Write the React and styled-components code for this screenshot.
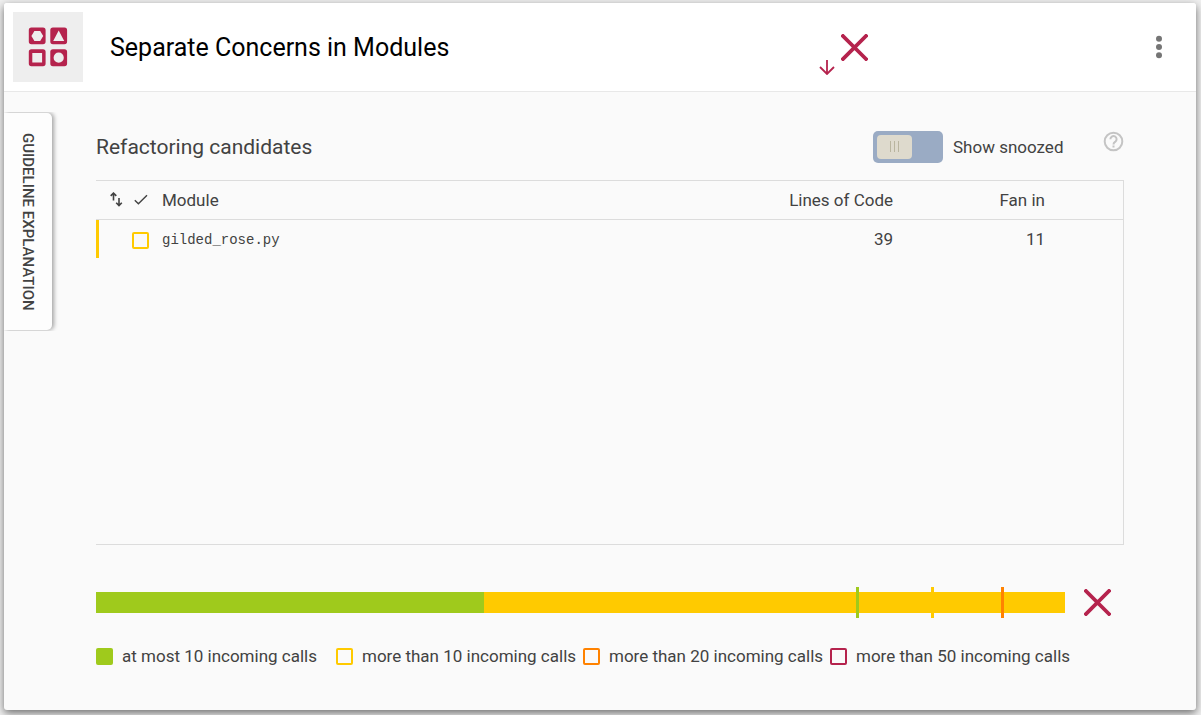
import React, { useState } from "react";
import styled, { createGlobalStyle } from "styled-components";

const colors = {
  crimson: "#b5234d",
  green: "#9fca1c",
  yellow: "#ffca00",
  orange: "#ff8200",
  text: "#424242",
  line: "#dcdcdc",
};

const GlobalStyle = createGlobalStyle`
  *, *::before, *::after { box-sizing: border-box; }
  body {
    margin: 0;
    background: #f0f0f0;
    color: ${colors.text};
    font-family: Roboto, "Liberation Sans", sans-serif;
    font-size: 17px;
    line-height: 24px;
  }
  button { font: inherit; color: inherit; border: 0; background: none; padding: 0; cursor: pointer; }
  svg { display: block; flex: none; }
`;

const Page = styled.div`
  display: flex;
  min-height: 100vh;
  padding: 3px 5px 5px 4px;
`;

const Card = styled.main`
  display: flex;
  flex: 1;
  flex-direction: column;
  min-width: 0;
  background: #fafafa;
  border-radius: 3px;
  box-shadow: 0 3px 9px rgba(0, 0, 0, 0.55);
`;

const Header = styled.header`
  display: flex;
  align-items: center;
  height: 89px;
  padding: 0 24px 0 9px;
  background: #fff;
  border-bottom: 1px solid #e8e8e8;
  border-radius: 3px 3px 0 0;
`;

const Logo = styled.div`
  display: flex;
  align-items: center;
  justify-content: center;
  width: 70px;
  height: 70px;
  background: #eee;
`;

const Title = styled.h1`
  flex: 1;
  margin: 0;
  padding: 2px 0 0 27px;
  color: #000;
  font-size: 25px;
  font-weight: 400;
  line-height: 32px;
`;

const Rating = styled.div`
  display: flex;
  align-items: flex-end;
  gap: 6px;
  height: 56px;
  margin-right: 278px;
`;

const RatingMark = styled.div`
  align-self: center;
`;

const MenuButton = styled.button`
  display: flex;
  justify-content: center;
  width: 26px;
  height: 32px;
  align-items: center;
`;

const Body = styled.div`
  display: flex;
  flex: 1;
  align-items: stretch;
`;

const SideTab = styled.button`
  flex: none;
  align-self: flex-start;
  width: 48px;
  height: 217px;
  margin-top: 21px;
  border-radius: 0 5px 5px 0;
  background: #fdfdfd;
  box-shadow: 2px 0 4px rgba(0, 0, 0, 0.35);
  clip-path: inset(-1px -7px -1px 0);
  font-size: 15px;
  font-weight: 500;
  line-height: 18px;
  writing-mode: vertical-rl;
`;

const Content = styled.section`
  display: flex;
  flex: 1;
  flex-direction: column;
  min-width: 0;
  padding: 39px 72px 42px 44px;
`;

const Toolbar = styled.div`
  display: flex;
  height: 49px;
`;

const Heading = styled.h2`
  flex: 1;
  margin: 0;
  font-size: 21px;
  font-weight: 400;
  line-height: 32px;
`;

const SwitchLabel = styled.label`
  display: flex;
  align-items: center;
  gap: 10px;
  width: 194px;
  height: 32px;
  margin-right: 36px;
`;

const SwitchInput = styled.input`
  appearance: none;
  display: flex;
  align-items: center;
  width: 70px;
  height: 32px;
  margin: 0;
  padding: 4px;
  border-radius: 5px;
  background: #9aabc4;
  cursor: pointer;

  &::before {
    content: "";
    width: 35px;
    height: 24px;
    border-radius: 4px;
    background:
      linear-gradient(#b9b59f, #b9b59f) 13px 6px / 1px 11px no-repeat,
      linear-gradient(#b9b59f, #b9b59f) 17px 6px / 1px 11px no-repeat,
      linear-gradient(#b9b59f, #b9b59f) 21px 6px / 1px 11px no-repeat,
      #dedacd;
  }
  &:checked { justify-content: flex-end; }
`;

const HelpButton = styled.button`
  width: 21px;
  height: 21px;
`;

const TableFrame = styled.div`
  flex: 1;
  min-height: 240px;
  border: solid ${colors.line};
  border-width: 1px 1px 1px 0;
`;

const Table = styled.table`
  width: 100%;
  table-layout: fixed;
  border-collapse: separate;
  border-spacing: 0;
`;

const Col = styled.col`
  width: ${(p) => p.$width};
`;

const HeadCell = styled.th`
  height: 39px;
  padding: 0;
  border-bottom: 1px solid ${colors.line};
  font-weight: 400;
  text-align: ${(p) => (p.$numeric ? "right" : "left")};
`;

const HeadIcon = styled.span`
  display: block;
  padding-left: ${(p) => (p.$inset ? "13px" : "2px")};
`;

const Cell = styled.td`
  height: 38px;
  padding: 0;
  border-left: ${(p) => (p.$accent ? `3px solid ${p.$accent}` : "0")};
  text-align: ${(p) => (p.$numeric ? "right" : "left")};
`;

const FileName = styled.span`
  display: block;
  padding-top: 2px;
  font-family: "Liberation Mono", monospace;
  font-size: 14px;
`;

const Check = styled.input`
  appearance: none;
  display: block;
  width: 17px;
  height: 17px;
  margin: 2px 0 0;
  border: 2px solid ${colors.yellow};
  border-radius: 2px;
  cursor: pointer;
  &:checked { background: ${colors.yellow}; }
`;

const Profile = styled.div`
  display: flex;
  align-items: center;
  gap: 19px;
  height: 31px;
  margin: 42px 13px 26px 0;
`;

const Bar = styled.div`
  position: relative;
  display: flex;
  flex: 1;
  height: 21px;
`;

const Segment = styled.div`
  flex: ${(p) => p.$share};
  background: ${(p) => p.$color};
`;

const Tick = styled.div`
  position: absolute;
  top: -5px;
  bottom: -5px;
  width: 3px;
  background: ${(p) => p.$color};
`;

const Legend = styled.ul`
  display: flex;
  margin: 0;
  padding: 0;
  list-style: none;
  white-space: nowrap;
`;

const LegendItem = styled.li`
  display: flex;
  align-items: center;
  gap: 9px;
  min-width: 247px;

  &:first-child { min-width: 240px; }
`;

const Swatch = styled.span`
  width: 17px;
  height: 17px;
  border: 2px solid ${(p) => p.$color};
  border-radius: 2px;
  background: ${(p) => (p.$filled ? p.$color : "transparent")};
`;

const Cross = () => (
  <svg width="27" height="27" viewBox="0 0 27 27" aria-label="Not met" role="img">
    <path d="M2 2 25 25M25 2 2 25" stroke={colors.crimson} strokeWidth="3.8" fill="none" strokeLinecap="square" />
  </svg>
);

const ModulesIcon = () => (
  <svg width="40" height="40" viewBox="0 0 40 40" fill={colors.crimson} fillRule="evenodd" aria-hidden="true">
    <path d="M3.4 0.6h11.6q2.6 0 2.6 2.6v11.4q0 2.6-2.6 2.6H3.4q-2.6 0-2.6-2.6V3.2q0-2.6 2.6-2.6ZM6.4 4 3.4 9l3 5h5.8l3-5-3-5Z" />
    <path d="M24.9 0.6h11.6q2.6 0 2.6 2.6v11.4q0 2.6-2.6 2.6H24.9q-2.6 0-2.6-2.6V3.2q0-2.6 2.6-2.6ZM30.7 3.6 25.2 14h11Z" />
    <path d="M3.4 22.2h11.6q2.6 0 2.6 2.6v11.8q0 2.6-2.6 2.6H3.4q-2.6 0-2.6-2.6V24.8q0-2.6 2.6-2.6ZM4.3 26v9.6h9.8V26Z" />
    <path d="M24.9 22.2h11.6q2.6 0 2.6 2.6v11.8q0 2.6-2.6 2.6H24.9q-2.6 0-2.6-2.6V24.8q0-2.6 2.6-2.6ZM30.7 25.6a5.1 5.1 0 1 0 0 10.2a5.1 5.1 0 1 0 0-10.2Z" />
  </svg>
);

const legend = [
  { label: "at most 10 incoming calls", color: colors.green, filled: true },
  { label: "more than 10 incoming calls", color: colors.yellow },
  { label: "more than 20 incoming calls", color: colors.orange },
  { label: "more than 50 incoming calls", color: colors.crimson },
];

const ticks = [
  { at: 78.4, color: colors.green },
  { at: 86.2, color: colors.yellow },
  { at: 93.4, color: colors.orange },
];

const modules = [{ name: "gilded_rose.py", lines: 39, fanIn: 11 }];

export default function App() {
  const [snoozed, setSnoozed] = useState(false);
  return (
    <>
      <GlobalStyle />
      <Page>
        <Card>
          <Header>
            <Logo><ModulesIcon /></Logo>
            <Title>Separate Concerns in Modules</Title>
            <Rating>
              <svg width="16" height="16" viewBox="0 0 16 16" fill="none" stroke={colors.crimson} strokeWidth="1.8" aria-hidden="true">
                <path d="M8 1V15M1 8 8 15 15 8" />
              </svg>
              <RatingMark><Cross /></RatingMark>
            </Rating>
            <MenuButton aria-label="More options">
              <svg width="8" height="24" viewBox="0 0 8 24" fill="#757575" aria-hidden="true">
                <circle cx="4" cy="3.7" r="3" />
                <circle cx="4" cy="12" r="3" />
                <circle cx="4" cy="20.3" r="3" />
              </svg>
            </MenuButton>
          </Header>
          <Body>
            <SideTab>GUIDELINE EXPLANATION</SideTab>
            <Content>
              <Toolbar>
                <Heading>Refactoring candidates</Heading>
                <SwitchLabel>
                  <SwitchInput type="checkbox" role="switch" checked={snoozed} onChange={(e) => setSnoozed(e.target.checked)} />
                  Show snoozed
                </SwitchLabel>
                <HelpButton aria-label="Help">
                  <svg width="21" height="21" viewBox="0 0 21 21" fill="none" stroke="#c4c4c4" strokeWidth="2" aria-hidden="true">
                    <circle cx="10.5" cy="10.5" r="8.8" />
                    <path d="M7.4 8.3a3.1 3.1 0 1 1 4.8 2.5c-1 .7-1.7 1.1-1.7 2.6M10.5 14.6v2" />
                  </svg>
                </HelpButton>
              </Toolbar>
              <TableFrame>
                <Table>
                  <colgroup>
                    <Col $width="36px" />
                    <Col $width="30px" />
                    <Col />
                    <Col $width="200px" />
                    <Col $width="152px" />
                    <Col $width="78px" />
                  </colgroup>
                  <thead>
                    <tr>
                      <HeadCell aria-label="Sort">
                        <HeadIcon $inset>
                          <svg width="14" height="16" viewBox="0 0 14 16" fill="none" stroke={colors.text} strokeWidth="1.6" aria-hidden="true">
                            <path d="M4.5 8.5V1.5M1.7 3.9 4.5 1.1l2.8 2.8M10 6v7.4M7.2 10.8l2.8 2.8 2.8-2.8" />
                          </svg>
                        </HeadIcon>
                      </HeadCell>
                      <HeadCell aria-label="Done">
                        <HeadIcon>
                          <svg width="14" height="12" viewBox="0 0 14 12" fill="none" stroke={colors.text} strokeWidth="1.4" aria-hidden="true">
                            <path d="M0.8 6.2 4.4 9.8 13 1.2" />
                          </svg>
                        </HeadIcon>
                      </HeadCell>
                      <HeadCell>Module</HeadCell>
                      <HeadCell $numeric>Lines of Code</HeadCell>
                      <HeadCell $numeric>Fan in</HeadCell>
                      <HeadCell as="td" />
                    </tr>
                  </thead>
                  <tbody>
                    {modules.map((m) => (
                      <tr key={m.name}>
                        <Cell $accent={colors.yellow} />
                        <Cell><Check type="checkbox" aria-label={m.name} /></Cell>
                        <Cell><FileName>{m.name}</FileName></Cell>
                        <Cell $numeric>{m.lines}</Cell>
                        <Cell $numeric>{m.fanIn}</Cell>
                        <Cell />
                      </tr>
                    ))}
                  </tbody>
                </Table>
              </TableFrame>
              <Profile>
                <Bar>
                  <Segment $share={40} $color={colors.green} />
                  <Segment $share={60} $color={colors.yellow} />
                  {ticks.map((t) => (
                    <Tick key={t.at} $color={t.color} style={{ left: `${t.at}%` }} />
                  ))}
                </Bar>
                <Cross />
              </Profile>
              <Legend>
                {legend.map((l) => (
                  <LegendItem key={l.label}>
                    <Swatch $color={l.color} $filled={l.filled} />
                    {l.label}
                  </LegendItem>
                ))}
              </Legend>
            </Content>
          </Body>
        </Card>
      </Page>
    </>
  );
}
